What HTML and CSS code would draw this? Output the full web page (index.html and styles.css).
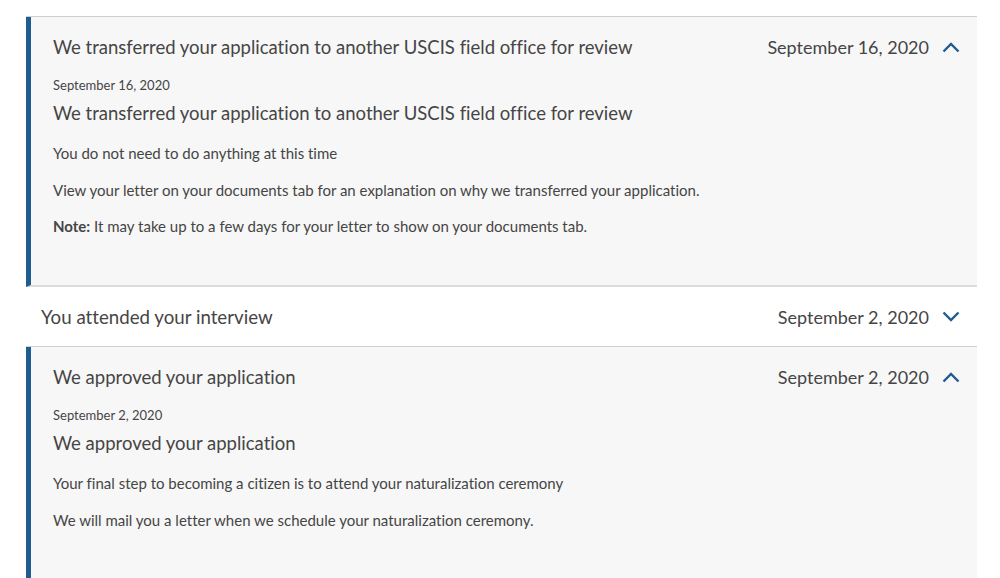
FILE: index.html
```html
<!DOCTYPE html>
<html>
<head>
<meta charset="utf-8">
<link rel="stylesheet" href="styles.css">
</head>
<body>
<div class="timeline">
  <section class="item open">
    <div class="head">
      <span class="title">We transferred your application to another USCIS field office for review</span>
      <span class="right"><span class="date">September 16, 2020</span>
        <svg class="chev" width="18" height="11" viewBox="0 0 18 11"><path d="M1.5 9.5 L9 2 L16.5 9.5" fill="none" stroke="#205d8f" stroke-width="2.4"/></svg>
      </span>
    </div>
    <div class="body">
      <div class="small-date">September 16, 2020</div>
      <h3>We transferred your application to another USCIS field office for review</h3>
      <p>You do not need to do anything at this time</p>
      <p>View your letter on your documents tab for an explanation on why we transferred your application.</p>
      <p><strong>Note:</strong> It may take up to a few days for your letter to show on your documents tab.</p>
    </div>
  </section>
  <section class="item closed">
    <div class="head">
      <span class="title">You attended your interview</span>
      <span class="right"><span class="date">September 2, 2020</span>
        <svg class="chev" width="18" height="11" viewBox="0 0 18 11"><path d="M1.5 1.5 L9 9 L16.5 1.5" fill="none" stroke="#205d8f" stroke-width="2.4"/></svg>
      </span>
    </div>
  </section>
  <section class="item open">
    <div class="head">
      <span class="title">We approved your application</span>
      <span class="right"><span class="date">September 2, 2020</span>
        <svg class="chev" width="18" height="11" viewBox="0 0 18 11"><path d="M1.5 9.5 L9 2 L16.5 9.5" fill="none" stroke="#205d8f" stroke-width="2.4"/></svg>
      </span>
    </div>
    <div class="body">
      <div class="small-date">September 2, 2020</div>
      <h3>We approved your application</h3>
      <p>Your final step to becoming a citizen is to attend your naturalization ceremony</p>
      <p>We will mail you a letter when we schedule your naturalization ceremony.</p>
    </div>
  </section>
</div>
</body>
</html>
```

FILE: styles.css
```css
html, body {
  margin: 0;
  padding: 0;
  background: #ffffff;
}
body {
  font-family: "Lato", "Liberation Sans", sans-serif;
  font-variant-ligatures: none;
  color: #454545;
}
.timeline {
  margin: 16px 23px 0 26px;
  border-top: 1px solid #d0d0d0;
}
.item.open {
  background: #f7f7f7;
  border-left: 5px solid #205d8f;
  border-bottom: 2px solid #dcdcdc;
}
.item.closed {
  background: #ffffff;
  border-bottom: 1px solid #d0d0d0;
}
.head {
  height: 60px;
  display: flex;
  align-items: center;
  justify-content: space-between;
  padding: 0 17px 0 22px;
  font-size: 18.5px;
}
.item.closed .head {
  padding-left: 15px;
  font-size: 18.7px;
}
.item.open + .item.closed .head { height: 59px; }
.right {
  display: flex;
  align-items: center;
  gap: 13px;
}
.date { font-size: 18px; }
.chev { display: block; }
.body {
  padding: 0 22px 49px 22px;
}
.item:last-child .body {
  padding-bottom: 70px;
}
.small-date {
  font-size: 13px;
  line-height: 16px;
}
h3 {
  margin: 8px 0 0;
  font-size: 18.5px;
  line-height: 24px;
  font-weight: 400;
}
p {
  margin: 16.5px 0 0;
  font-size: 15px;
  line-height: 20px;
}
h3 + p { margin-top: 18px; }
strong { font-weight: 700; }
```
